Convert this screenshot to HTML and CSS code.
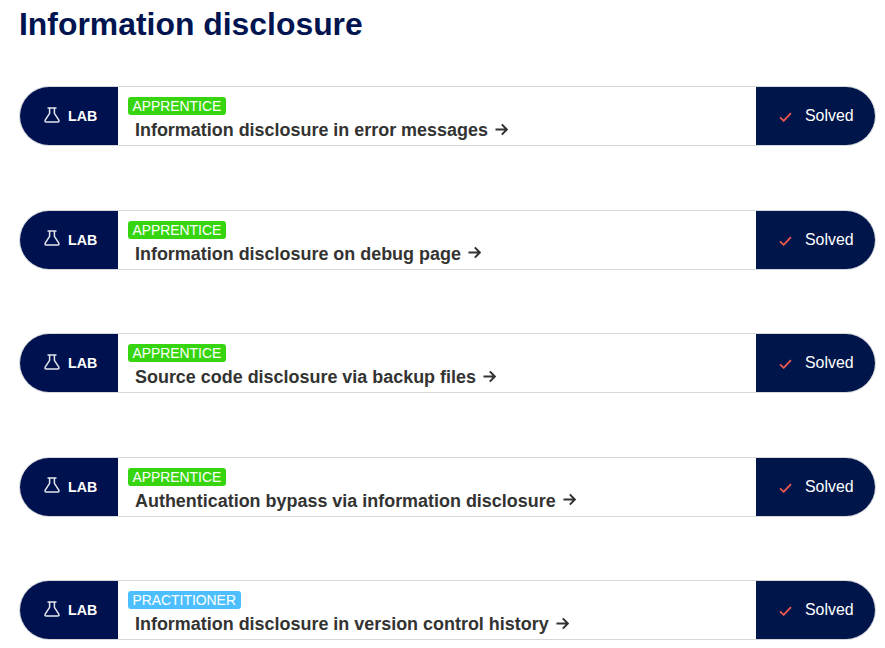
FILE: index.html
```html
<!DOCTYPE html>
<html lang="en">
<head>
<meta charset="utf-8">
<title>Information disclosure</title>
<link rel="stylesheet" href="styles.css">
</head>
<body>
<svg class="defs" width="0" height="0">
  <symbol id="flask" viewBox="0 0 16 16"><path d="M3.500 1H12.500M5.600 1V6.300L1.200 13.200Q.5 15 2.300 15H13.700Q15.500 15 14.800 13.200L10.400 6.300V1"/></symbol>
  <symbol id="arrow" viewBox="0 0 14 14"><path d="M.5 7H12.500M7.300 1.500L12.800 7L7.300 12.500"/></symbol>
  <symbol id="check" viewBox="0 0 14 11"><path d="M1 6L5 9.700L13 1.300"/></symbol>
</svg>
<h1>Information disclosure</h1>
<main class="labs">
  <a class="lab"><span class="kind"><svg class="flask"><use href="#flask"/></svg>LAB</span><span class="info"><span class="level">APPRENTICE</span><span class="name">Information disclosure in error messages<svg class="arrow"><use href="#arrow"/></svg></span></span><span class="status"><svg class="check"><use href="#check"/></svg>Solved</span></a>
  <a class="lab"><span class="kind"><svg class="flask"><use href="#flask"/></svg>LAB</span><span class="info"><span class="level">APPRENTICE</span><span class="name">Information disclosure on debug page<svg class="arrow"><use href="#arrow"/></svg></span></span><span class="status"><svg class="check"><use href="#check"/></svg>Solved</span></a>
  <a class="lab"><span class="kind"><svg class="flask"><use href="#flask"/></svg>LAB</span><span class="info"><span class="level">APPRENTICE</span><span class="name">Source code disclosure via backup files<svg class="arrow"><use href="#arrow"/></svg></span></span><span class="status"><svg class="check"><use href="#check"/></svg>Solved</span></a>
  <a class="lab"><span class="kind"><svg class="flask"><use href="#flask"/></svg>LAB</span><span class="info"><span class="level">APPRENTICE</span><span class="name">Authentication bypass via information disclosure<svg class="arrow"><use href="#arrow"/></svg></span></span><span class="status"><svg class="check"><use href="#check"/></svg>Solved</span></a>
  <a class="lab"><span class="kind"><svg class="flask"><use href="#flask"/></svg>LAB</span><span class="info"><span class="level practitioner">PRACTITIONER</span><span class="name">Information disclosure in version control history<svg class="arrow"><use href="#arrow"/></svg></span></span><span class="status"><svg class="check"><use href="#check"/></svg>Solved</span></a>
</main>
</body>
</html>
```
FILE: styles.css
```css
* { box-sizing: border-box; }
body {
  margin: 0;
  height: 648px;
  overflow: hidden;
  background: #fff;
  font-family: "Liberation Sans", Arial, sans-serif;
}
.defs { display: block; }
svg { fill: none; stroke: currentColor; flex: none; }
h1 {
  margin: 0 0 0 19px;
  padding-top: 5px;
  height: 86px;
  font-size: 31.9px;
  line-height: 38px;
  color: #00144f;
}
.labs {
  display: flex;
  flex-direction: column;
  gap: 63.6px;
  margin: 0 9px 0 19px;
}
.lab {
  display: flex;
  height: 60px;
  border: 1px solid #d5d7d9;
  border-radius: 30px;
  overflow: hidden;
}
.kind {
  display: flex;
  align-items: center;
  width: 98px;
  padding-left: 24px;
  background: #00114f;
  color: #fff;
  font-size: 14.2px;
  font-weight: bold;
}
.flask { width: 16px; height: 16px; margin: -3px 8px 0 0; stroke-width: 1.5; color: #e4e6ee; }
.info {
  flex: 1;
  display: flex;
  flex-direction: column;
  align-items: flex-start;
  padding: 10px 0 0 9.5px;
}
.level {
  height: 18px;
  padding: 0 5px;
  border-radius: 3px;
  background: #37d50f;
  color: #fff;
  font-size: 13.9px;
  line-height: 18px;
}
.practitioner { background: #4dbfff; }
.name {
  display: flex;
  align-items: center;
  margin: 4px 0 0 7.5px;
  color: #333332;
  font-size: 17.95px;
  font-weight: bold;
  line-height: 22px;
  white-space: nowrap;
}
.arrow { width: 13px; height: 13px; margin: -2px 0 0 7px; stroke-width: 2.2; }
.status {
  display: flex;
  align-items: center;
  width: 119px;
  padding-left: 23px;
  background: #00164a;
  color: #fff;
  font-size: 15.9px;
}
.check { width: 13px; height: 10px; margin: 2px 13px 0 0; stroke-width: 2; color: #f0584f; }
```
